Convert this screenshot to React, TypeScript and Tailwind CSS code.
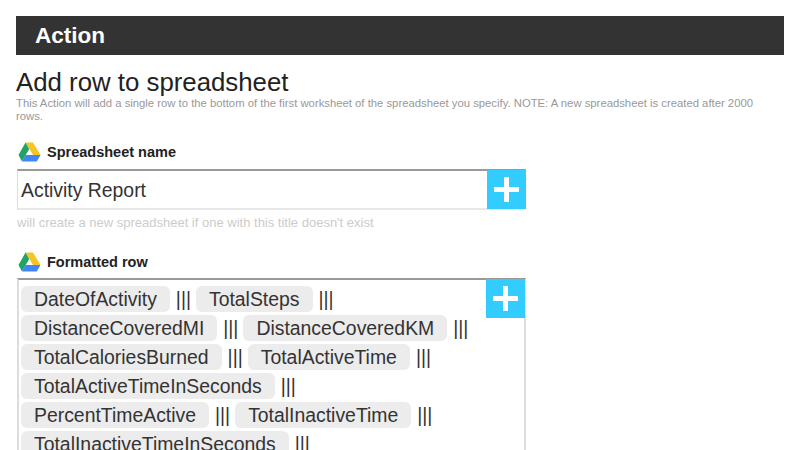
function Drive() {
  return (
    <svg width="23" height="20" viewBox="0 0 23 20" className="shrink-0 -mt-[2px]">
      <polygon points="7.5,0.5 15,0.5 22.5,13 15,13" fill="#f7c325" />
      <polygon points="7.5,0.5 11.2,7 4,19.5 0.5,13" fill="#1fa463" />
      <polygon points="7.5,13 22.5,13 18.8,19.5 4,19.5" fill="#4285f4" />
    </svg>
  );
}

function Plus() {
  return (
    <div className="absolute top-0 right-0 w-[39px] h-[39px] bg-[#33ccff] flex items-center justify-center">
      <svg width="25" height="25" viewBox="0 0 25 25">
        <rect x="10" y="0" width="5" height="25" fill="#fff" />
        <rect x="0" y="10" width="25" height="5" fill="#fff" />
      </svg>
    </div>
  );
}

function Label({ children }: { children: string }) {
  return (
    <div className="flex items-center gap-[6px] pl-[2px] h-[20px]">
      <Drive />
      <span className="text-[14.5px] font-bold text-[#222]">{children}</span>
    </div>
  );
}

const rows: string[][] = [
  ["DateOfActivity", "TotalSteps"],
  ["DistanceCoveredMI", "DistanceCoveredKM"],
  ["TotalCaloriesBurned", "TotalActiveTime"],
  ["TotalActiveTimeInSeconds"],
  ["PercentTimeActive", "TotalInactiveTime"],
  ["TotalInactiveTimeInSeconds"],
];

export default function App() {
  return (
    <div className="w-[800px] h-[450px] overflow-hidden bg-white px-4 pt-4 font-['Liberation_Sans',Arial,sans-serif]">
      <div className="h-[39px] bg-[#333333] flex items-center pl-[19px] text-white font-bold text-[22.5px]">Action</div>
      <h1 className="mt-[12px] text-[25.8px] leading-[30px] text-[#222] font-normal">Add row to spreadsheet</h1>
      <p className="max-w-[760px] text-[11.3px] leading-[13px] text-[#999]">
        This Action will add a single row to the bottom of the first worksheet of the spreadsheet you specify. NOTE: A new spreadsheet is created after 2000 rows.
      </p>
      <div className="mt-[20px]">
        <Label>Spreadsheet name</Label>
      </div>
      <div className="relative mt-[6px] ml-[1px] w-[509px] h-[41px] border-t-2 border-t-[#999] border-x border-x-[#ddd] border-b-2 border-b-[#e8e8e8] pl-[3px] text-[19.4px] leading-[39px] text-[#333]">
        Activity Report
        <div className="absolute top-[-1px] right-[-1px]"><Plus /></div>
      </div>
      <p className="mt-[5px] ml-[1px] text-[13px] leading-[16px] text-[#ccc]">will create a new spreadsheet if one with this title doesn't exist</p>
      <div className="mt-[22px]">
        <Label>Formatted row</Label>
      </div>
      <div className="relative mt-[5px] ml-[1px] w-[509px] h-[200px] border-t-2 border-t-[#999] border-x-2 border-x-[#ddd] pl-[2px] pt-[6px] text-[19.4px] text-[#333]">
        <div className="absolute top-[-1px] right-[-1px]"><Plus /></div>
        <div className="flex flex-col gap-[3px]">
          {rows.map((row, i) => (
            <div key={i} className="flex items-center gap-[5px] h-[26px]">
              {row.map((t) => (
                <div key={t} className="flex items-center gap-[6px]">
                  <span className="h-[26px] leading-[26px] bg-[#ececec] rounded-[6px] px-[13px]">{t}</span>
                  <span className="leading-[26px]">|||</span>
                </div>
              ))}
            </div>
          ))}
        </div>
      </div>
    </div>
  );
}
